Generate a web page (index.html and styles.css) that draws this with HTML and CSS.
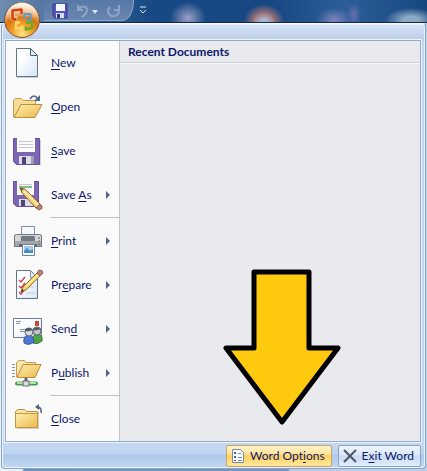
FILE: index.html
```html
<!DOCTYPE html>
<html lang="en">
<head>
    <meta charset="UTF-8">
    <meta name="viewport" content="width=device-width, initial-scale=1.0">
    <title>Word Options</title>
    <link rel="stylesheet" href="styles.css">
</head>
<body>

    <!-- Title bar with the quick access toolbar -->
    <header class="title-bar">
        <button class="office-button" aria-label="Office Button">
            <svg width="40" height="40" viewBox="0 0 40 40">
                <defs>
                    <radialGradient id="orb" cx="50%" cy="90%" r="85%">
                        <stop offset="0" stop-color="#ffe889"/>
                        <stop offset=".3" stop-color="#f6a52e"/>
                        <stop offset=".6" stop-color="#d9740f"/>
                        <stop offset="1" stop-color="#f3d3a0"/>
                    </radialGradient>
                    <linearGradient id="shine" x2="0" y2="1">
                        <stop offset="0" stop-color="#fff" stop-opacity=".85"/>
                        <stop offset="1" stop-color="#fff" stop-opacity=".1"/>
                    </linearGradient>
                </defs>
                <circle cx="20" cy="20" r="17.500" fill="url(#orb)" stroke="#75543a"/>
                <path d="M3.500 19a16.500 16.500 0 0 1 33 0q-16-5-33 0z" fill="url(#shine)"/>
                <g fill="none" stroke-linejoin="round">
                    <path d="M10.500 10.500l9-1v3M10.500 10.500v8h5" stroke="#ffd9b0" stroke-width="4.500" opacity=".7"/>
                    <path d="M19.500 14V9.500l-9 1v8.500l4 .5" stroke="#d8400f" stroke-width="2.500"/>
                    <path d="M22.500 19v-5h6v6h-4" stroke="#5b9bd6" stroke-width="2"/>
                    <path d="M18 22.500h-4v6h6v-3" stroke="#ffda6a" stroke-width="2.500"/>
                    <path d="M24 23l6-1v6l-6 1.500v-3" stroke="#6cab22" stroke-width="2.500"/>
                </g>
            </svg>
        </button>
        <div class="quick-access">
            <button aria-label="Save">
                <svg width="16" height="16" viewBox="0 0 16 16">
                    <path d="M1 1h14v14H3l-2-2z" fill="#5655bb" stroke="#39398f"/>
                    <path d="M4 1h9v7H4z" fill="#f4f6ff"/>
                    <path d="M4 10h8v5H4z" fill="#d5d9ef"/>
                    <path d="M5 11h3v4H5z" fill="#33337a"/>
                </svg>
            </button>
            <button aria-label="Undo">
                <svg width="24" height="16" viewBox="0 0 24 16">
                    <path d="M3 2v5h5M3.500 6.500C7 1 13 4 12 8c-.5 3-3 4-5 6" fill="none" stroke="#8fa4c6" stroke-width="2"/>
                    <path d="M17 7h6l-3 4z" fill="#d7e2f2"/>
                </svg>
            </button>
            <button aria-label="Redo">
                <svg width="16" height="16" viewBox="0 0 16 16">
                    <path d="M13 2v5H8M4 4C0 8 3 14 8 13c4 0 6-4 4-7" fill="none" stroke="#8fa4c6" stroke-width="2"/>
                </svg>
            </button>
        </div>
        <button class="customize" aria-label="Customize Quick Access Toolbar">
            <svg width="8" height="8" viewBox="0 0 8 8">
                <path d="M1 1h6M1 4l3 3 3-3" fill="none" stroke="#dbe6f5"/>
            </svg>
        </button>
    </header>

    <main class="office-menu">
        <div class="menu-body">
            <!-- Commands -->
            <nav class="commands">
                <button class="command">
                    <svg width="32" height="32" viewBox="0 0 32 32">
                        <path d="M5 2h14l7 8v21H5z" fill="#c9ccd2"/>
                        <path d="M4.500 1.500h14l7 7v21h-21z" fill="url(#paper)" stroke="#5f7686"/>
                        <path d="M18.500 1.500v7h7z" fill="#dce9f5" stroke="#4c6475"/>
                        <defs>
                            <linearGradient id="paper" x2="1" y2="1">
                                <stop offset=".3" stop-color="#fff"/>
                                <stop offset="1" stop-color="#d5e3f5"/>
                            </linearGradient>
                            <linearGradient id="folder" x2="1" y2="1">
                                <stop offset="0" stop-color="#fff0ac"/>
                                <stop offset="1" stop-color="#e9b850"/>
                            </linearGradient>
                        </defs>
                    </svg>
                    <span><u>N</u>ew</span>
                </button>
                <button class="command">
                    <svg width="32" height="32" viewBox="0 0 32 32">
                        <path d="M1.500 26V9.500l2-2h6l2 2h12V14" fill="#f7dc97" stroke="#c89a4d"/>
                        <path d="M2 26.500l7-13h21l-7 13z" fill="url(#folder)" stroke="#bd8c38"/>
                        <path d="M18 8q4-6 8 0" fill="none" stroke="#526a88" stroke-width="1.500"/>
                        <path d="M28 4v6h-6z" fill="#526a88"/>
                    </svg>
                    <span><u>O</u>pen</span>
                </button>
                <button class="command">
                    <svg width="32" height="32" viewBox="0 0 32 32">
                        <path d="M3 5h26v25H5z" fill="#d2d2da"/>
                        <path d="M1.500 3.500h26v26h-23l-3-3z" fill="#7d65b3" stroke="#64519a"/>
                        <path d="M5 3h18v14H5z" fill="#fbfbfd"/>
                        <path d="M7 6.500h14M7 9.500h14M7 12.500h14" stroke="#c5c9ce"/>
                        <path d="M7 21h15v8H7z" fill="#dcdee5"/>
                        <path d="M10 22h4v7h-4z" fill="#51447e"/>
                        <path d="M19 21h3v8h-3z" fill="#9b9dab"/>
                    </svg>
                    <span><u>S</u>ave</span>
                </button>
                <button class="command">
                    <svg width="32" height="32" viewBox="0 0 32 32">
                        <path d="M1.500 2.500h25v25h-22l-3-3z" fill="#7d65b3" stroke="#64519a"/>
                        <path d="M5 2h17v14H5z" fill="#fbfbfd"/>
                        <path d="M7 5.500h13" stroke="#c5c9ce"/>
                        <path d="M7 8h13" stroke="#59a75c" stroke-width="1.500"/>
                        <path d="M7 20h14v7H7z" fill="#dcdee5"/>
                        <path d="M9 21h4v6H9z" fill="#51447e"/>
                        <path d="M8 9l5 1 15 15-4 4L10 14z" fill="#f5cf78" stroke="#8d6a35"/>
                        <path d="M8 9l3 1-1 2z" fill="#443"/>
                        <path d="M12 12l14 14" stroke="#fff0b5" stroke-width="1.500"/>
                        <path d="M24 29l4-4 2 2q1 3-3 4z" fill="#c98073" stroke="#74605c"/>
                    </svg>
                    <span>Save <u>A</u>s</span>
                    <i class="more"></i>
                </button>
                <hr>
                <button class="command">
                    <svg width="32" height="32" viewBox="0 0 32 32">
                        <path d="M9.500 10V1.500h13V10" fill="#f5f9fe" stroke="#8090a0"/>
                        <path d="M4 9h24l2 2v11H2V11z" fill="#a4a7ad"/>
                        <path d="M4 9h24l1 2v5H3v-5z" fill="#d6d7da"/>
                        <path d="M9 11h14v5H9z" fill="#727983"/>
                        <path d="M2.500 21.500v-11l2-1h23l2 1v11z" fill="none" stroke="#74777d"/>
                        <path d="M26 13h2M26 16h2M26 19h2" stroke="#5e646c"/>
                        <path d="M7 19h18v3H7z" fill="#60656d"/>
                        <path d="M10.500 19.500h12v11h-12z" fill="#f2f8ff" stroke="#708191"/>
                        <path d="M12 21h9v7h-9z" fill="#9fccef"/>
                        <path d="M12 26l3-3 3 3 3-2v4h-9z" fill="#438bc4"/>
                        <path d="M18 22h2v2h-2z" fill="#f4c777"/>
                    </svg>
                    <span><u>P</u>rint</span>
                    <i class="more"></i>
                </button>
                <button class="command">
                    <svg width="32" height="32" viewBox="0 0 32 32">
                        <path d="M4.500 1.500h14l7 7v21h-21z" fill="url(#paper)" stroke="#5f7686"/>
                        <path d="M18.500 1.500v7h7z" fill="#dce9f5" stroke="#8597a5"/>
                        <path d="M7 11l2 2 4-5M7 17l2 2 4-5M7 23l2 2 3-4" fill="none" stroke="#cb4452" stroke-width="1.500"/>
                        <path d="M14 18h8M14 24h8" stroke="#c5d0dc"/>
                        <path d="M9 23l2-5L25 4l3 3-14 14z" fill="#f5cf63" stroke="#967236"/>
                        <path d="M13 18L26 6" stroke="#fff0a8" stroke-width="1.500"/>
                        <path d="M9 23l1-3 2 2z" fill="#333"/>
                        <path d="M25 4l2-3q4 0 4 3l-3 3z" fill="#cc7c70" stroke="#80615e"/>
                    </svg>
                    <span>Pr<u>e</u>pare</span>
                    <i class="more"></i>
                </button>
                <button class="command">
                    <svg width="32" height="32" viewBox="0 0 32 32">
                        <path d="M1.500 5.500h28v19h-28z" fill="url(#paper)" stroke="#687f96"/>
                        <path d="M4 8.500h5M4 10.500h4M8 16.500h8M8 18.500h6" stroke="#7f94ae"/>
                        <path d="M23 8h4v5h-4z" fill="#c9482f"/>
                        <path d="M21 30q-2-8 4-9 6 0 5 7-4 4-9 2z" fill="#4fa543" stroke="#39763b"/>
                        <circle cx="25" cy="18" r="4" fill="#c3c6ca" stroke="#60656c"/>
                        <path d="M21 17q1-5 8-1-5 2-8 1z" fill="#555b63"/>
                        <path d="M12 30q-1-7 4-8 6 0 6 7-5 4-10 1z" fill="#5078d2" stroke="#3455a1"/>
                        <circle cx="17" cy="19" r="4" fill="#d7d9dc" stroke="#656a71"/>
                        <path d="M13 18q1-6 8-1-5 2-8 1z" fill="#555b63"/>
                    </svg>
                    <span>Sen<u>d</u></span>
                    <i class="more"></i>
                </button>
                <button class="command">
                    <svg width="32" height="32" viewBox="0 0 32 32">
                        <path d="M0 7.500h3M0 10.500h3M0 13.500h3M0 16.500h3M0 19.500h3" stroke="#8192a5"/>
                        <path d="M4.500 20V5.500l2-2h6l2 2h9V10" fill="#fae5a8" stroke="#c89a4d"/>
                        <path d="M5 20.500l6-13h18l-6 13z" fill="url(#folder)" stroke="#bd8c38"/>
                        <path d="M14 21v5" stroke="#61696f" stroke-width="3"/>
                        <path d="M5 26.500h19" stroke="#4b9950" stroke-width="4" stroke-linecap="round"/>
                        <path d="M5 26h19" stroke="#a8e5a1" stroke-width="2"/>
                        <path d="M11 24h6v5h-6z" fill="#d7dde2" stroke="#5e6a73"/>
                    </svg>
                    <span>P<u>u</u>blish</span>
                    <i class="more"></i>
                </button>
                <hr>
                <button class="command">
                    <svg width="32" height="32" viewBox="0 0 32 32">
                        <path d="M5 9h22v17H5z" fill="#d6d1c7"/>
                        <path d="M3.500 24.500v-16l2-2h7l2 2h11v16z" fill="#f9e4a5" stroke="#bd9143"/>
                        <path d="M3.500 10.500h22v14h-22z" fill="url(#folder)" stroke="#c5953f"/>
                        <path d="M26 4q4 1 3 6" fill="none" stroke="#53657d" stroke-width="1.500"/>
                        <path d="M23 4l4-3v6z" fill="#53657d"/>
                    </svg>
                    <span><u>C</u>lose</span>
                </button>
            </nav>

            <!-- Recent documents -->
            <section class="recent">
                <h2>Recent Documents</h2>
                <svg class="arrow" width="118" height="158" viewBox="0 0 118 158">
                    <path d="M31 4h55v76h29l-56 74L3 80h28z" fill="#ffc90e" stroke="#000" stroke-width="5" stroke-linejoin="round"/>
                </svg>
            </section>
        </div>

        <footer class="menu-footer">
            <button class="footer-button selected">
                <svg width="16" height="16" viewBox="0 0 16 16">
                    <path d="M2.500 1.500h8l3 3v10h-11z" fill="#f7fafe" stroke="#7489a3"/>
                    <path d="M4 4h2v2H4zM4 8h2v2H4zM4 12h2v1H4z" fill="#4b6284"/>
                    <path d="M8 5.500h3M8 9.500h4M8 12.500h4" stroke="#758ba9"/>
                </svg>
                <span>Word Opt<u>i</u>ons</span>
            </button>
            <button class="footer-button">
                <svg width="16" height="16" viewBox="0 0 16 16">
                    <path d="M2 2l12 12M14 2L2 14" stroke="#4d5562" stroke-width="2"/>
                </svg>
                <span>E<u>x</u>it Word</span>
            </button>
        </footer>
    </main>

</body>
</html>
```
FILE: styles.css
```css
* {
    box-sizing: border-box;
}

body {
    margin: 0;
    min-height: 100vh;
    font-family: Lato, "Open Sans", sans-serif;
    font-size: 12px;
    line-height: 16px;
    font-variant-ligatures: none; /* Keeps the underlined letter apart in "Options" */
    color: #0c176b;
    background: linear-gradient(to right, #e8f3fa 22px, #6d93c0 24px, #7197c2 288px, #b5cde9 290px);
}

button {
    font: inherit;
    font-variant-ligatures: none;
    color: inherit;
    border: none;
    background: none;
    padding: 0;
    cursor: pointer;
}

svg {
    display: block;
    flex: none;
}

u {
    text-underline-offset: 2px;
}

/* Title bar */
.title-bar {
    position: relative;
    display: flex;
    align-items: flex-start;
    height: 23px;
    padding-left: 44px;
    border-bottom: 1px solid #14294e;
    background:
        radial-gradient(ellipse 18px 16px at 188px 18px, #9b9fc5, rgba(155, 159, 197, 0)),
        radial-gradient(ellipse 11px 9px at 264px 22px, #a6b4cf 30%, rgba(166, 180, 207, 0)),
        radial-gradient(ellipse 20px 18px at 264px 22px, #a57577 45%, rgba(165, 117, 119, 0)),
        radial-gradient(ellipse 18px 12px at 334px 20px, #7e83bc, rgba(126, 131, 188, 0)),
        radial-gradient(ellipse 7px 12px at 354px 15px, #6870b0, rgba(104, 112, 176, 0)),
        radial-gradient(ellipse 26px 12px at 411px 20px, #8ba9c2 30%, rgba(139, 169, 194, 0)),
        linear-gradient(to right, #6e8bb0, #174984 150px, #174782 270px, #2d5e99 345px, #18477f);
}

.office-button {
    position: absolute; /* The orb hangs over the menu edge */
    left: 2px;
    top: 0;
    z-index: 2;
}

.quick-access {
    display: flex;
    gap: 7px;
    height: 21px;
    width: 90px;
    padding: 2px 0 0 8px;
    border: 1px solid #8ba5c9;
    border-width: 0 1px 1px 0;
    border-radius: 0 0 12px 0 / 0 0 20px 0;
    background: linear-gradient(#5779a8, #6986ae);
}

.customize {
    margin: 6px 0 0 5px;
}

/* Office menu */
.office-menu {
    margin: 0 1px;
    padding: 0 4px 0 3px;
    border: 1px solid #8aa5c9;
    border-top-color: #f4f9ff;
    border-radius: 4px;
    background: linear-gradient(#d6e4f6, #bacde9 16px, #c3d8f0 18px, #c3d8f0 418px, #bed3ef 430px, #adc8e9 431px, #c1d8f2);
    box-shadow: inset 0 0 0 1px #e7f2fd;
}

.menu-body {
    display: flex;
    margin-top: 16px;
    border: 1px solid #93a9cb;
    box-shadow: 0 0 0 1px #edf5fd;
}

.commands {
    flex: none;
    width: 114px;
    background: #fafafa;
    border-right: 1px solid #c5c5c9;
}

.command {
    display: flex;
    align-items: center;
    gap: 7px;
    width: 100%;
    height: 44px;
    padding: 0 9px 0 6px;
    text-align: left;
}

.command:hover {
    background: #ffe7a2;
}

.commands hr {
    height: 2px;
    margin: 0 0 0 44px;
    border: none;
    border-top: 1px solid #c0c0c4;
}

.more {
    margin-left: auto;
    border: 4px solid transparent;
    border-left-color: #536489;
    border-right-width: 0;
}

.recent {
    position: relative;
    flex: 1;
    background: #e9eaee;
}

.recent h2 {
    margin: 0;
    padding: 3px 8px 2px;
    font-size: 12px;
    line-height: 16px;
    border-bottom: 1px solid #cfd1d5;
    box-shadow: 0 1px #f8f8fa;
}

.arrow {
    position: absolute; /* Pointer laid over the pane */
    right: 79px;
    bottom: 15px;
}

.menu-footer {
    display: flex;
    justify-content: flex-end;
    gap: 6px;
    padding: 3px 0 1px;
}

.footer-button {
    display: flex;
    align-items: center;
    gap: 4px;
    height: 22px;
    padding: 0 6px 0 3px;
    border: 1px solid #8ba3c6;
    border-radius: 2px;
    background: linear-gradient(#edf4fd, #dce9f9 45%, #c9dcf3 50%, #dfecfb);
}

.footer-button.selected {
    border-color: #c3a56a;
    background: linear-gradient(#fff3cc, #ffe29a 40%, #ffd05d 50%, #ffe79e);
}
```
